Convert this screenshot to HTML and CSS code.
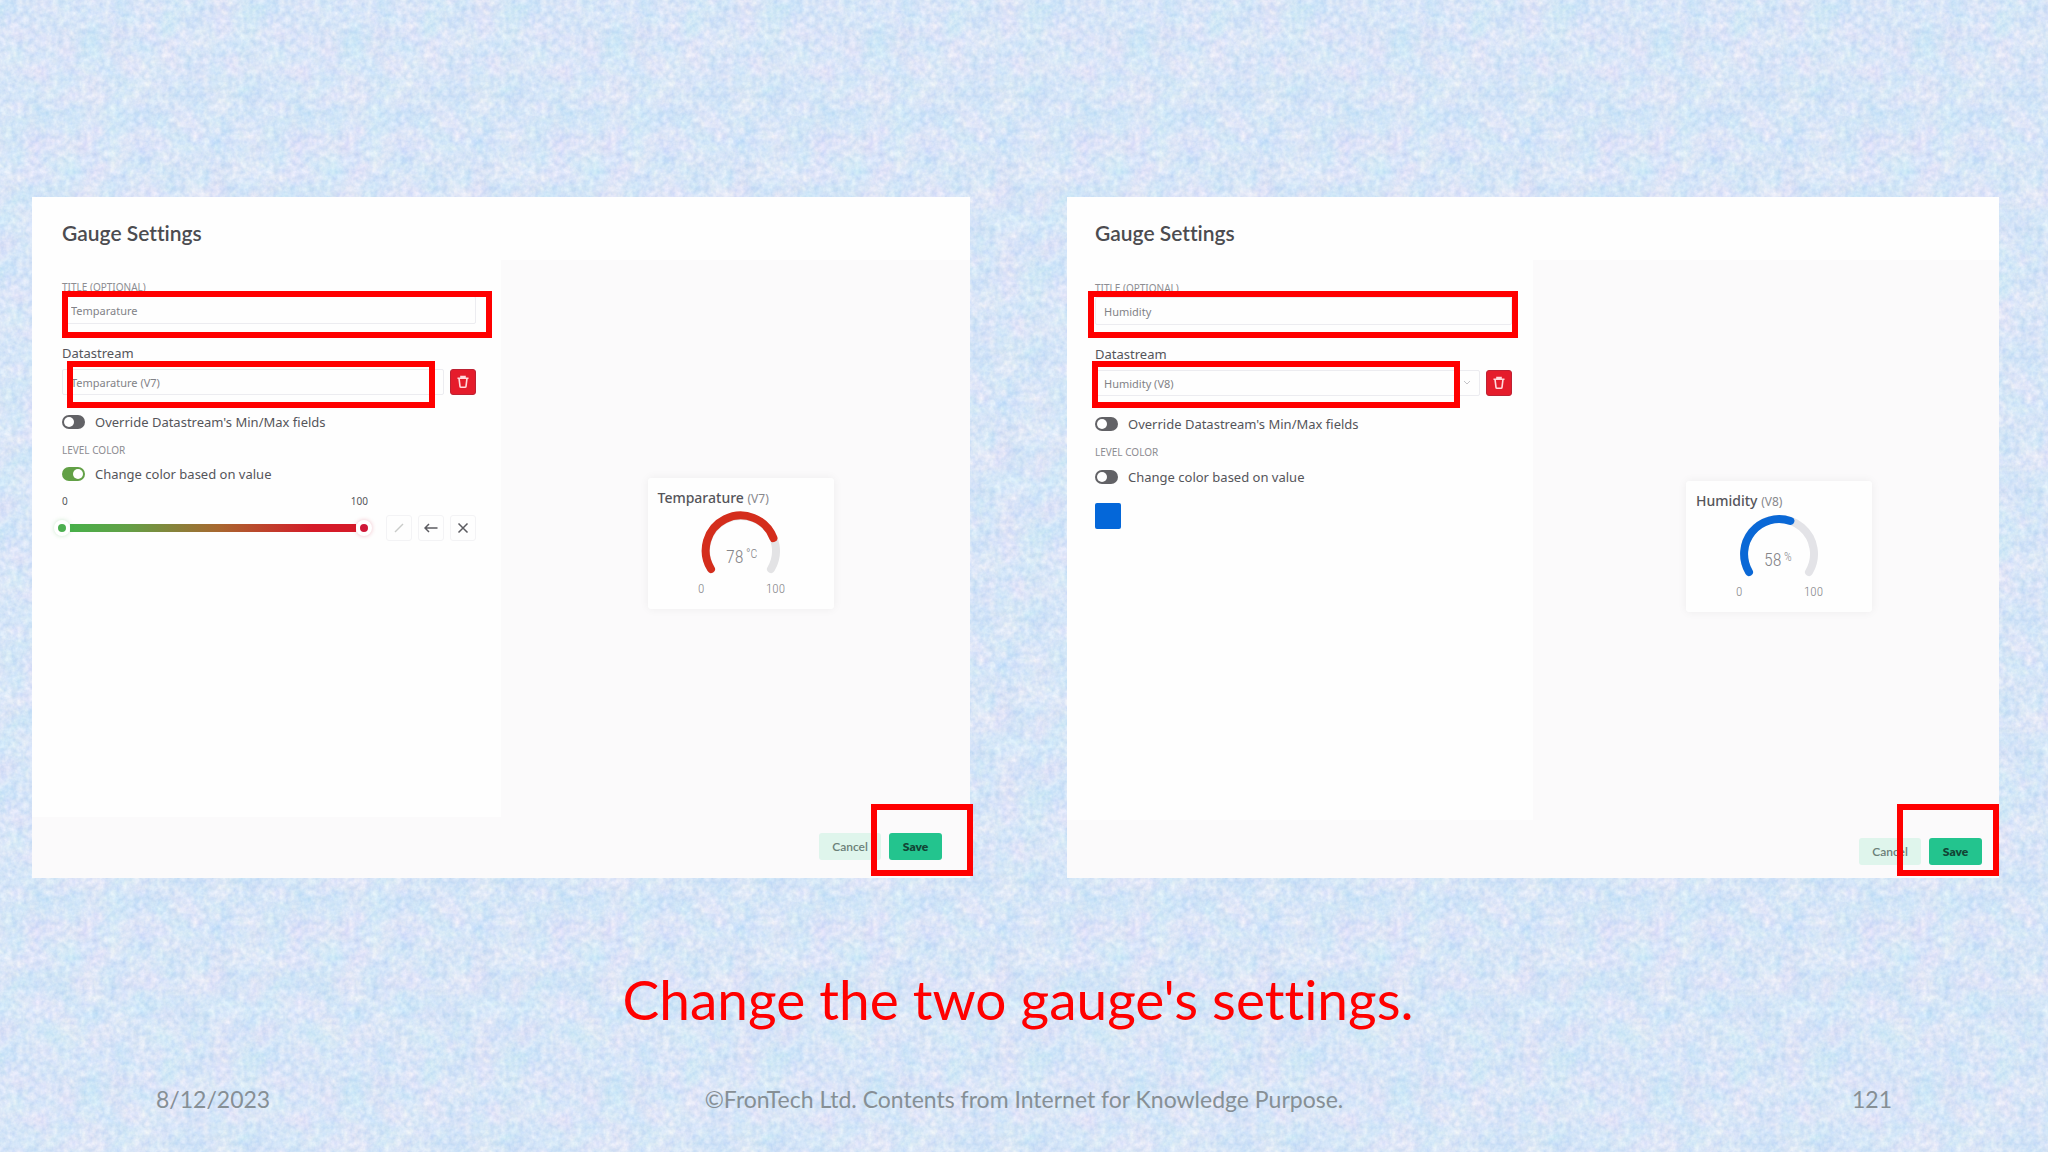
FILE: index.html
```html
<!DOCTYPE html>
<html lang="en">
<head>
<meta charset="utf-8">
<meta name="viewport" content="width=device-width, initial-scale=1">
<title>Gauge settings</title>
<link rel="stylesheet" href="styles.css">
</head>
<body>
<main class="slide">
  <div class="dialogs">
    <section class="dialog dialog-temperature">
      <h2 class="dialog-title">Gauge Settings</h2>
      <div class="dialog-body">
        <form class="settings">
          <label class="caps" for="title-t">TITLE (OPTIONAL)</label>
          <input class="field" id="title-t" type="text" value="Temparature">
          <label class="field-label" for="stream-t">Datastream</label>
          <div class="stream-row">
            <select class="field" id="stream-t"><option>Temparature (V7)</option></select>
            <button class="trash" type="button" aria-label="Delete">
              <svg viewBox="0 0 14 14" width="14" height="14" fill="none" stroke="currentColor" stroke-width="1.6"><path d="M1.5 3.2H12.5M3 3.2L4 11.4Q4.1 12.3 5 12.3H9Q9.900 12.3 10 11.4L11 3.2M5 3V1.6H9V3"/></svg>
            </button>
          </div>
          <label class="toggle-row"><input class="toggle" type="checkbox">Override Datastream's Min/Max fields</label>
          <p class="caps">LEVEL COLOR</p>
          <label class="toggle-row"><input class="toggle" type="checkbox" checked>Change color based on value</label>
          <div class="scale"><span>0</span><span>100</span></div>
          <div class="slider-row">
            <div class="slider">
              <input class="range range-low" type="range" min="0" max="100" value="0" aria-label="Low level">
              <input class="range range-high" type="range" min="0" max="100" value="100" aria-label="High level">
            </div>
            <div class="tools">
              <button class="tool faint" type="button" aria-label="Edit"><svg viewBox="0 0 14 14" width="14" height="14" fill="none" stroke="currentColor" stroke-width="1.5"><path d="M3 11L11 3"/></svg></button>
              <button class="tool" type="button" aria-label="Back"><svg viewBox="0 0 14 14" width="14" height="14" fill="none" stroke="currentColor" stroke-width="1.5"><path d="M13.5 7H1M5 3L1 7L5 11"/></svg></button>
              <button class="tool" type="button" aria-label="Clear"><svg viewBox="0 0 14 14" width="14" height="14" fill="none" stroke="currentColor" stroke-width="1.5"><path d="M2.5 2.5L11.5 11.5M11.5 2.5L2.5 11.5"/></svg></button>
            </div>
          </div>
        </form>
        <div class="preview">
          <article class="widget">
            <h3 class="widget-title">Temparature <small>(V7)</small></h3>
            <svg class="gauge" viewBox="0 0 106 92" width="106" height="92">
              <g fill="none" stroke-width="8" stroke-linecap="round">
                <path stroke="#e3e3e5" d="M23 60A35 35 0 1 1 83 60"/>
                <path stroke="#d42d1c" d="M23 60A35 35 0 1 1 85.400 29"/>
              </g>
              <text class="value" x="38" y="54">78</text>
              <text class="unit" x="58" y="49">°C</text>
              <text class="bound" x="10" y="84">0</text>
              <text class="bound" x="78" y="84">100</text>
            </svg>
          </article>
        </div>
      </div>
      <footer class="actions">
        <button class="btn btn-cancel" type="button">Cancel</button>
        <button class="btn btn-save" type="button">Save</button>
      </footer>
      <span class="mark mark-title"></span>
      <span class="mark mark-stream"></span>
      <span class="mark mark-save"></span>
    </section>

    <section class="dialog dialog-humidity">
      <h2 class="dialog-title">Gauge Settings</h2>
      <div class="dialog-body">
        <form class="settings">
          <label class="caps" for="title-h">TITLE (OPTIONAL)</label>
          <input class="field" id="title-h" type="text" value="Humidity">
          <label class="field-label" for="stream-h">Datastream</label>
          <div class="stream-row">
            <select class="field chevron" id="stream-h"><option>Humidity (V8)</option></select>
            <button class="trash" type="button" aria-label="Delete">
              <svg viewBox="0 0 14 14" width="14" height="14" fill="none" stroke="currentColor" stroke-width="1.6"><path d="M1.5 3.2H12.5M3 3.2L4 11.4Q4.1 12.3 5 12.3H9Q9.900 12.3 10 11.4L11 3.2M5 3V1.6H9V3"/></svg>
            </button>
          </div>
          <label class="toggle-row"><input class="toggle" type="checkbox">Override Datastream's Min/Max fields</label>
          <p class="caps">LEVEL COLOR</p>
          <label class="toggle-row"><input class="toggle" type="checkbox">Change color based on value</label>
          <button class="swatch" type="button" aria-label="Level color"></button>
        </form>
        <div class="preview">
          <article class="widget">
            <h3 class="widget-title">Humidity <small>(V8)</small></h3>
            <svg class="gauge" viewBox="0 0 106 92" width="106" height="92">
              <g fill="none" stroke-width="8" stroke-linecap="round">
                <path stroke="#e3e3e7" d="M23 60A35 35 0 1 1 83 60"/>
                <path stroke="#0a68d6" d="M23 60A35 35 0 0 1 64.400 9"/>
              </g>
              <text class="value" x="38" y="54">58</text>
              <text class="unit" x="58" y="49">%</text>
              <text class="bound" x="10" y="84">0</text>
              <text class="bound" x="78" y="84">100</text>
            </svg>
          </article>
        </div>
      </div>
      <footer class="actions">
        <button class="btn btn-cancel" type="button">Cancel</button>
        <button class="btn btn-save" type="button">Save</button>
      </footer>
      <span class="mark mark-title"></span>
      <span class="mark mark-stream"></span>
      <span class="mark mark-save"></span>
    </section>
  </div>
  <h1 class="caption">Change the two gauge's settings.</h1>
  <footer class="slide-footer">
    <span>8/12/2023</span>
    <span>©FronTech Ltd. Contents from Internet for Knowledge Purpose.</span>
    <span>121</span>
  </footer>
</main>
</body>
</html>
```
FILE: styles.css
```css
*,
*::before {
  box-sizing: border-box;
}

body {
  margin: 0;
  min-height: 100vh;
  font-family: "Noto Sans", "Open Sans", sans-serif;
  color: #55555a;
  /* mottled paper tile */
  background: #d6e6f6 url("data:image/svg+xml,%3Csvg xmlns='http://www.w3.org/2000/svg' width='262' height='262'%3E%3Cfilter id='a' x='0' y='0' width='100%25' height='100%25' color-interpolation-filters='sRGB'%3E%3CfeTurbulence type='fractalNoise' baseFrequency='.17' numOctaves='3' seed='4' stitchTiles='stitch'/%3E%3CfeColorMatrix values='.34 0 0 0 .67 .22 .04 0 0 .77 .06 0 .06 0 .91 0 0 0 0 1'/%3E%3C/filter%3E%3Cfilter id='b' x='0' y='0' width='100%25' height='100%25' color-interpolation-filters='sRGB'%3E%3CfeTurbulence type='fractalNoise' baseFrequency='.04' numOctaves='2' seed='9' stitchTiles='stitch'/%3E%3CfeColorMatrix values='.36 0 0 0 .67 .04 .14 0 0 .81 0 0 .06 0 .94 0 0 0 0 .4'/%3E%3C/filter%3E%3Crect width='262' height='262' filter='url(%23a)'/%3E%3Crect width='262' height='262' filter='url(%23b)'/%3E%3C/svg%3E");
}

.slide {
  min-height: 100vh;
  padding-top: 197px;
  display: flex;
  flex-direction: column;
}

.dialogs {
  display: grid;
  grid-template-columns: 938fr 932fr;
  gap: 97px;
  padding: 0 49px 0 32px;
}

.dialog {
  position: relative;
  display: flex;
  flex-direction: column;
  min-height: 681px;
  background: #fefefe;
}

.dialog-title {
  margin: 0;
  padding: 21px 30px 0;
  height: 63px;
  font: 600 21px/30px Lato, sans-serif;
  font-variant-ligatures: none;
  color: #4c4c50;
}

.dialog-body {
  flex: 1;
  display: grid;
  grid-template-columns: 1fr 1fr;
}

.settings {
  padding: 18px 25px 0 30px;
  display: flex;
  flex-direction: column;
}

.caps {
  margin: 0;
  font-size: 10px;
  line-height: 18px;
  color: #8d8d92;
}

.field {
  width: 100%;
  height: 28px;
  padding: 0 8px;
  border: 1px solid #ececf0;
  border-radius: 2px;
  background: #fefefe;
  font: 11px "Noto Sans", sans-serif;
  color: #828287;
  appearance: none;
}

.chevron {
  background: #fefefe url("data:image/svg+xml,%3Csvg xmlns='http://www.w3.org/2000/svg' width='8' height='6' fill='none' stroke='%23c4c4c8'%3E%3Cpath d='M1 1l3 3l3-3'/%3E%3C/svg%3E") no-repeat right 8px center;
}

.field-label {
  margin-top: 19px;
  font-size: 13px;
  line-height: 20px;
}

.stream-row {
  margin-top: 6px;
  display: flex;
  gap: 6px;
}

.trash {
  flex: none;
  display: grid;
  place-items: center;
  width: 26px;
  height: 26px;
  padding: 0;
  border: 1px solid #bd2233;
  border-radius: 3px;
  background: #e51c2b;
  color: #ffd9dc;
}

.stream-row .field {
  height: 26px;
}

.toggle-row {
  display: flex;
  align-items: center;
  gap: 10px;
  height: 20px;
  font-size: 13px;
}

.stream-row + .toggle-row {
  margin: 17px 0 9px;
}

.caps + .toggle-row {
  margin-top: 5px;
}

.toggle {
  appearance: none;
  margin: 0;
  width: 23px;
  height: 14px;
  padding: 2px;
  border-radius: 7px;
  background: #626266;
}

.toggle::before {
  content: "";
  display: block;
  width: 10px;
  height: 10px;
  border-radius: 50%;
  background: #fff;
}

.toggle:checked {
  background: #62a046;
}

.toggle:checked::before {
  margin-left: auto;
}

.scale {
  display: flex;
  justify-content: space-between;
  width: 306px;
  margin-top: 9px;
  font-size: 10px;
  line-height: 16px;
}

.slider-row {
  display: flex;
  align-items: center;
  justify-content: space-between;
  margin: 6px 0 0 -8px;
}

.slider {
  display: grid;
  width: 318px;
  height: 26px;
  align-items: center;
  background: linear-gradient(90deg, #47b04a, #62a046 20%, #a8672f 52%, #d51a28 85%, #d51a28) center / 286px 8px no-repeat;
}

.range {
  grid-area: 1 / 1;
  appearance: none;
  width: 100%;
  height: 16px;
  margin: 0;
  background: none;
  pointer-events: none;
}

.range::-webkit-slider-thumb {
  appearance: none;
  pointer-events: auto;
  width: 16px;
  height: 16px;
  border: 4px solid #fff;
  border-radius: 50%;
  background: #4caf50;
  box-shadow: 0 0 4px #4caf5044;
}

.range-high::-webkit-slider-thumb {
  background: #cf1838;
  box-shadow: 0 0 4px #cf183844;
}

.tools {
  display: flex;
  gap: 6px;
}

.tool {
  display: grid;
  place-items: center;
  width: 26px;
  height: 26px;
  padding: 0;
  border: 1px solid #f3f3f5;
  border-radius: 3px;
  background: #fefefe;
  color: #5b5b60;
}

.faint {
  color: #c9cbc9;
}

.swatch {
  width: 26px;
  height: 26px;
  margin-top: 16px;
  padding: 0;
  border: 0;
  border-radius: 2px;
  background: #0467d9;
}

.preview {
  display: grid;
  place-items: center;
  padding: 10px 0 0 10px;
  background: #fbfafb;
}

.widget {
  display: flex;
  flex-direction: column;
  width: 186px;
  height: 131px;
  padding: 10px 10px 0;
  border-radius: 3px;
  background: #fefefe;
  box-shadow: 0 0 10px #0000000f;
}

.widget-title {
  margin: 0;
  font-size: 14px;
  line-height: 20px;
  font-weight: 500;
  white-space: nowrap;
}

.widget-title small {
  font-size: 12px;
  font-weight: 400;
  color: #88888d;
}

.gauge {
  align-self: center;
}

.gauge text {
  font-family: "Liberation Sans Narrow", "Roboto Condensed", Roboto, sans-serif;
  font-weight: 300;
  fill: #858589;
}

.value {
  font-size: 18px;
}

.unit {
  font-size: 12px;
}

.bound {
  font-size: 13px;
}

.actions {
  display: flex;
  justify-content: flex-end;
  align-items: center;
  gap: 8px;
  height: 61px;
  padding: 0 28px 2px;
  background: #fbfafb;
}

.btn {
  height: 27px;
  padding: 0;
  border: 0;
  border-radius: 3px;
  font: 600 12px Lato, sans-serif;
}

.btn-cancel {
  width: 62px;
  background: #dff5ec;
  color: #6b7f78;
}

.btn-save {
  width: 53px;
  background: #23c48e;
  color: #124535;
  font-weight: 800;
}

/* red callouts drawn over the dialog */
.mark {
  position: absolute;
  border: 6px solid #f00;
  pointer-events: none;
}

.mark-title {
  left: 30px;
  top: 94px;
  width: 430px;
  height: 47px;
}

.mark-stream {
  left: 35px;
  top: 164px;
  width: 368px;
  height: 47px;
}

.mark-save {
  right: -3px;
  bottom: 2px;
  width: 102px;
  height: 72px;
}

.dialog-humidity .dialog-title {
  padding-left: 28px;
}

.dialog-humidity .settings {
  padding: 19px 21px 0 28px;
}

.dialog-humidity .toggle-row {
  height: 21px;
}

.dialog-humidity .preview {
  padding: 13px 0 0 26px;
}

.dialog-humidity .actions {
  height: 58px;
  padding: 4px 17px 0;
}

.dialog-humidity .mark-title {
  left: 21px;
}

.dialog-humidity .mark-stream {
  left: 25px;
}

.dialog-humidity .mark-save {
  right: 0;
}

.caption {
  margin: 88px 0 0;
  padding-right: 12px;
  font: 400 55px/66px Lato, sans-serif;
  font-variant-ligatures: none;
  text-align: center;
  color: #f00;
}

.slide-footer {
  display: grid;
  grid-template-columns: 1fr auto 1fr;
  margin-top: 52px;
  padding: 0 156px;
  font: 23px/30px Lato, sans-serif;
  font-variant-ligatures: none;
  color: #868f95;
}

.slide-footer span:last-child {
  text-align: right;
}
```
